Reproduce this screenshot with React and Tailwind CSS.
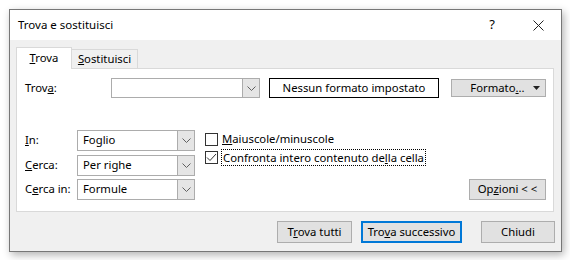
import React from "react";

const font = { fontFamily: '"Noto Sans", "Liberation Sans", sans-serif' };

const Chevron = () => (
  <svg width="9" height="5" viewBox="0 0 9 5" fill="none" stroke="#606060" strokeWidth="1">
    <path d="M0.5 0.5L4.5 4.5L8.5 0.5" />
  </svg>
);

const Select = ({ value }) => (
  <div className="flex h-[21px] w-[118px] border border-[#acacac] bg-white">
    <div className="flex flex-1 items-center pl-[5px]">{value}</div>
    <div className="flex w-[17px] items-center justify-center border-l border-[#acacac] bg-[#e5e5e5]">
      <Chevron />
    </div>
  </div>
);

const Btn = ({ children, className = "" }) => (
  <div
    className={
      "flex items-center justify-center border border-[#adadad] bg-[#e1e1e1] " + className
    }
  >
    {children}
  </div>
);

const Check = ({ checked }) => (
  <div className="flex h-[13px] w-[13px] items-center justify-center border border-[#333] bg-white">
    {checked && (
      <svg width="11" height="9" viewBox="0 0 11 9" fill="none" stroke="#333" strokeWidth="1">
        <path d="M1 4.5L4 7.5L10 1" />
      </svg>
    )}
  </div>
);

export default function App() {
  return (
    <div className="h-[260px] w-[570px] bg-white pl-[9px] pt-[9px] text-[11.3px] text-black" style={font}>
      <div className="flex h-[243px] w-[553px] flex-col border border-[#777] bg-[#f0f0f0] shadow-[2px_3px_8px_rgba(0,0,0,0.3)]">
        {/* Title bar */}
        <div className="flex h-[30px] items-center bg-white pl-[8px]">
          <span className="flex-1 text-[11.5px]">Trova e sostituisci</span>
          <span className="mr-[38px] text-[13px]">?</span>
          <svg width="11" height="11" viewBox="0 0 11 11" stroke="#222" strokeWidth="1" className="mr-[17px]">
            <path d="M0.5 0.5L10.5 10.5M10.5 0.5L0.5 10.5" />
          </svg>
        </div>

        {/* Body */}
        <div className="flex flex-1 flex-col pl-[6px] pt-[7px]">
          {/* Tabs */}
          <div className="relative z-10 flex h-[21px] items-end">
            <div className="-mb-px flex h-[22px] w-[56px] items-center justify-center border border-b-0 border-[#d9d9d9] bg-white pb-px">
              <span>
                <u>T</u>rova
              </span>
            </div>
            <div className="flex h-[19px] w-[66px] items-center justify-center border border-l-0 border-b-0 border-[#d9d9d9] bg-[#f0f0f0]">
              <span>
                <u>S</u>ostituisci
              </span>
            </div>
          </div>

          {/* Panel */}
          <div className="flex h-[144px] w-[538px] flex-col border border-[#d9d9d9] bg-white pl-[8px] pr-[7px] pt-[9px]">
            <div className="flex h-[20px] items-center">
              <div className="w-[86px]">
                Trov<u>a</u>:
              </div>
              <div className="flex h-[20px] w-[149px] border border-[#acacac] bg-white">
                <div className="flex-1" />
                <div className="flex w-[17px] items-center justify-center border-l border-[#acacac] bg-[#e5e5e5]">
                  <Chevron />
                </div>
              </div>
              <div className="ml-[9px] flex h-[20px] w-[170px] items-center justify-center border border-black">
                Nessun formato impostato
              </div>
              <Btn className="ml-[12px] h-[18px] w-[95px]">
                <span className="ml-[14px] flex-1 text-center">
                  Formato<u>.</u>..
                </span>
                <svg width="7" height="4" viewBox="0 0 7 4" className="ml-[4px] mr-[5px]">
                  <path d="M0 0H7L3.5 4Z" fill="#222" />
                </svg>
              </Btn>
            </div>

            <div className="mt-[32px] flex">
              <div className="flex flex-col gap-[3.5px]">
                <div className="flex items-center">
                  <div className="w-[52px]">
                    <u>I</u>n:
                  </div>
                  <Select value="Foglio" />
                </div>
                <div className="flex items-center">
                  <div className="w-[52px]">
                    <u>C</u>erca:
                  </div>
                  <Select value="Per righe" />
                </div>
                <div className="flex items-center">
                  <div className="w-[52px]">
                    C<u>e</u>rca in:
                  </div>
                  <Select value="Formule" />
                </div>
              </div>

              <div className="ml-[10px] mt-[2px] flex flex-1 flex-col">
                <div className="flex h-[15px] items-center">
                  <Check />
                  <span className="ml-[4px]">
                    <u>M</u>aiuscole/minuscole
                  </span>
                </div>
                <div className="mt-[2px] flex h-[17px] items-center">
                  <Check checked />
                  <span className="ml-[3px] border border-dotted border-black px-[1px] leading-[15px]">
                    Confronta intero contenuto de<u>l</u>la cella
                  </span>
                </div>
                <div className="mt-auto flex justify-end">
                  <Btn className="h-[21px] w-[77px]">
                    <span>
                      Op<u>z</u>ioni &lt; &lt;
                    </span>
                  </Btn>
                </div>
              </div>
            </div>
          </div>

          {/* Bottom buttons */}
          <div className="mt-[9px] flex justify-end pr-[6px]">
            <Btn className="h-[22px] w-[75px]">
              <span>
                T<u>r</u>ova tutti
              </span>
            </Btn>
            <div className="ml-[9px] flex h-[22px] w-[101px] items-center justify-center border-2 border-[#0078d7] bg-[#e1e1e1]">
              <span>
                Tro<u>v</u>a successivo
              </span>
            </div>
            <Btn className="ml-[19px] h-[22px] w-[74px]">Chiudi</Btn>
          </div>
        </div>
      </div>
    </div>
  );
}
